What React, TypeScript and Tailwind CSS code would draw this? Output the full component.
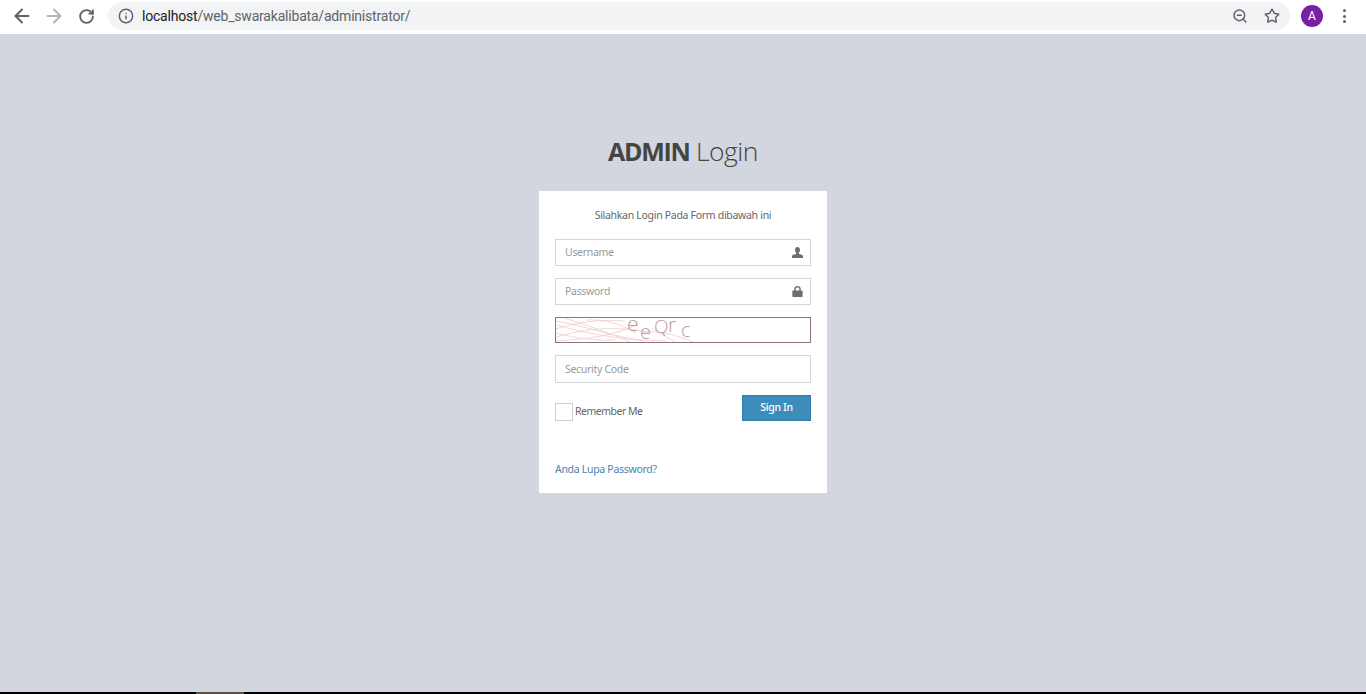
import { ArrowLeft, ArrowRight, RotateCw, Info, ZoomOut, Star } from "lucide-react";

const font = { fontFamily: '"Noto Sans", sans-serif' };

const UserIcon = () => (
  <svg viewBox="0 0 12 12" className="w-[11px] h-[11px] fill-[#6e6e6e]">
    <path d="M6 0C4.200 0 3.300 1.300 3.300 3.200c0 1.300.5 2.400 1.300 3.100v1.100L0.900 8.800C0.300 9 0 9.500 0 10.100V12h12v-1.900c0-.6-.3-1.100-.9-1.300L7.400 7.400V6.300c.8-.7 1.300-1.800 1.300-3.100C8.700 1.300 7.800 0 6 0z" />
  </svg>
);

const LockIcon = () => (
  <svg viewBox="0 0 12 12" className="w-[11px] h-[11px] fill-[#6e6e6e]">
    <path d="M6 0C3.900 0 2.400 1.400 2.400 3.400V5H1.200C0.700 5 0.400 5.300 0.400 5.800v5.400c0 .5.300.8.800.8h9.600c.5 0 .8-.3.800-.8V5.800c0-.5-.3-.8-.8-.8H9.600V3.400C9.600 1.400 8.100 0 6 0zM4 5V3.400C4 2.300 4.800 1.600 6 1.600s2 .7 2 1.800V5H4z" />
  </svg>
);

const Field = ({ placeholder, icon }: { placeholder: string; icon?: React.ReactNode }) => (
  <div className="h-[27px] border border-[#d2d6de] flex items-center justify-between pl-[9px] pr-[7px] bg-white">
    <span className="text-[10.5px] tracking-[-0.3px] text-[#999]">{placeholder}</span>
    {icon}
  </div>
);

// distorted security code picture
const Captcha = () => (
  <div className="h-[26px] border border-[#8d7474] bg-white">
    <svg width="254" height="24" viewBox="0 0 254 24" fill="none" className="block overflow-visible">
      <g stroke="#f0cccc" strokeWidth="0.8">
        <path d="M0 3C25 7 55 18 88 23" />
        <path d="M0 11C20 4 45 1 68 3" />
        <path d="M0 19C30 10 60 8 92 14" />
        <path d="M0 23C35 21 60 17 82 6" />
        <path d="M0 7C30 15 60 22 110 23" />
        <path d="M8 0C28 6 50 14 74 24" />
        <path d="M30 2C50 1 64 6 80 15" />
        <path d="M0 15C20 20 40 23 60 22" />
        <path d="M86 14C105 12 122 18 138 24" />
        <path d="M96 10C104 16 112 20 120 24" />
      </g>
      <g fill="#bd9ca0" fontFamily="Open Sans, sans-serif" fontWeight="300">
        <text x="71" y="13" fontSize="21">e</text>
        <text x="84" y="21" fontSize="20">e</text>
        <text x="98" y="15" fontSize="19">Q</text>
        <text x="112" y="14" fontSize="21">r</text>
        <text x="125" y="19" fontSize="20">c</text>
      </g>
    </svg>
  </div>
);

const App = () => {
  return (
    <div className="h-[694px] flex flex-col bg-[#d2d6de] overflow-hidden" style={font}>
      {/* Browser toolbar */}
      <div className="h-[34px] bg-white flex items-center pb-[2px] shrink-0">
        <div className="w-[108px] flex items-center pl-[11px] gap-[10px] shrink-0">
          <ArrowLeft className="w-[22px] h-[22px] text-[#5f6368]" strokeWidth={2.200} />
          <ArrowRight className="w-[22px] h-[22px] text-[#b4b6b9]" strokeWidth={2.200} />
          <div className="w-[22px] flex justify-center">
            <RotateCw className="w-[17px] h-[17px] text-[#5f6368]" strokeWidth={2.600} />
          </div>
        </div>
        <div className="w-[1182px] h-7 rounded-full bg-[#f1f3f4] flex items-center pl-[10px] pr-[10px] shrink-0">
          <Info className="w-[16px] h-[16px] text-[#5f6368]" strokeWidth={2.200} />
          <span className="ml-[8px] text-[14px] text-[#5f6368] tracking-[-0.2px]" style={{ fontFamily: '"Roboto", sans-serif' }}>
            <span className="text-[#202124]">localhost</span>/web_swarakalibata/administrator/
          </span>
          <div className="ml-auto flex items-center gap-[16px]">
            <ZoomOut className="w-4 h-4 text-[#5f6368]" strokeWidth={2.200} />
            <Star className="w-4 h-4 text-[#5f6368]" strokeWidth={2.200} />
          </div>
        </div>
        <div className="ml-[11px] w-[22px] h-[22px] rounded-full bg-[#7b1fa2] text-white text-[12px] flex items-center justify-center" style={{ fontFamily: '"Roboto", sans-serif' }}>
          A
        </div>
        <div className="ml-[20px] flex flex-col gap-[2.500px]">
          <span className="w-[3px] h-[3px] rounded-full bg-[#5f6368]" />
          <span className="w-[3px] h-[3px] rounded-full bg-[#5f6368]" />
          <span className="w-[3px] h-[3px] rounded-full bg-[#5f6368]" />
        </div>
      </div>

      {/* Login page */}
      <div className="flex-1 flex flex-col items-center pt-[97px]">
        <div className="h-[40px] leading-[40px] text-[25px] text-[#444]" style={{ fontFamily: '"Open Sans", sans-serif' }}>
          <b className="font-bold tracking-[-1.3px]">ADMIN</b> <span className="font-light text-[26.500px] tracking-[-0.5px]">Login</span>
        </div>
        <div className="mt-[20px] w-[288px] h-[302px] bg-white px-4 pt-4">
          <p className="text-center text-[10.500px] tracking-[-0.3px] leading-[16px] text-[#666]">Silahkan Login Pada Form dibawah ini</p>
          <div className="mt-4 flex flex-col gap-3">
            <Field placeholder="Username" icon={<UserIcon />} />
            <Field placeholder="Password" icon={<LockIcon />} />
            <Captcha />
            <div className="h-[28px] border border-[#d2d6de] flex items-center pl-[9px] pt-[1px]">
              <span className="text-[10.500px] tracking-[-0.3px] text-[#999]">Security Code</span>
            </div>
          </div>
          <div className="mt-3 flex items-start justify-between">
            <div className="mt-2 flex items-center gap-[2px]">
              <span className="w-[18px] h-[18px] border border-[#cfcfcf] bg-white" />
              <span className="text-[10.500px] tracking-[-0.5px] text-[#666]">Remember Me</span>
            </div>
            <button className="w-[69px] h-[26px] bg-[#3c8dbc] border border-[#367fa9] text-white text-[10.500px] tracking-[-0.3px] font-medium">
              Sign In
            </button>
          </div>
          <a className="block mt-[40px] text-[10.500px] tracking-[-0.3px] leading-[16px] text-[#4a83b0]">Anda Lupa Password?</a>
        </div>
      </div>

      {/* Bottom edge of the window */}
      <div className="h-[2px] bg-black shrink-0 flex">
        <div className="ml-[196px] w-[48px] bg-[#5b4f49]" />
      </div>
    </div>
  );
};

export default App;
